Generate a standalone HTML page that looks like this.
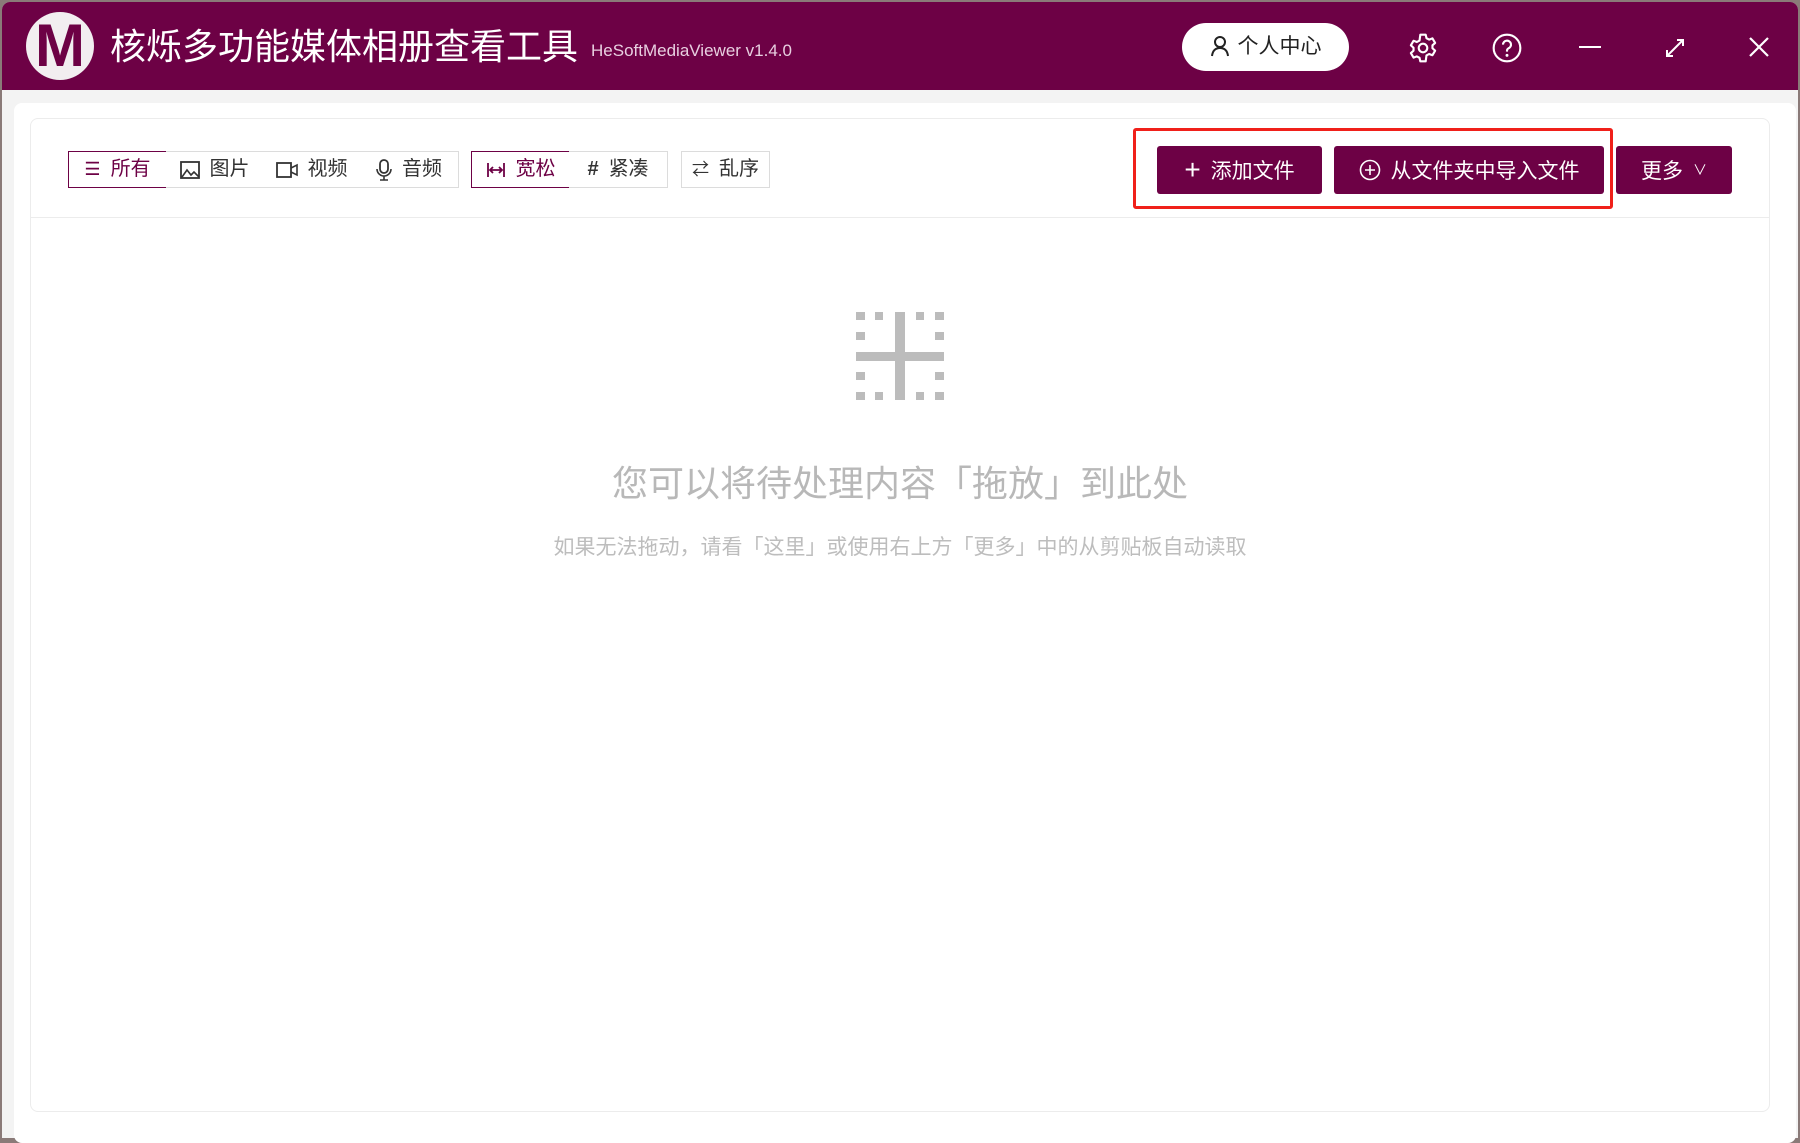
<!DOCTYPE html>
<html><head><meta charset="utf-8"><style>
*{margin:0;padding:0;box-sizing:border-box}
body{width:1800px;height:1140px;overflow:hidden;background:#8a7a78;font-family:"Liberation Sans","Noto Sans CJK SC",sans-serif;position:relative}
.win{position:absolute;left:2px;top:2px;width:1796px;height:1136px;background:#f3f3f3;border-radius:8px 8px 0 0;overflow:hidden}
.tb{position:absolute;left:0;top:0;width:100%;height:88px;background:#6d0145}
.abs{position:absolute}
.logo{left:24px;top:10px;width:68px;height:68px;border-radius:50%;background:#f2eef0;color:#6d0145;font-weight:bold;font-size:60px;line-height:68px;text-align:center;font-family:"Liberation Sans",sans-serif}
.title{left:108px;top:23px;color:#fff;font-size:36px;line-height:44px;white-space:nowrap}
.ver{left:589px;top:39px;color:#e8cfe0;font-size:17px;white-space:nowrap}
.pill{left:1180px;top:21px;width:167px;height:48px;border-radius:24px;background:#fff;color:#222;font-size:21px;line-height:48px;text-align:center}
.panel{left:14px;top:103px;width:1782px;height:1040px;background:#fff;border-radius:8px}
.card{left:30px;top:118px;width:1740px;height:994px;border:1px solid #ececec;border-radius:8px;background:#fff}
.line{left:31px;top:217px;width:1738px;height:1px;background:#ececec}
.btn{position:absolute;top:151px;height:37px;border:1px solid #dcdcdc;background:#fff;color:#333;font-size:20px;line-height:35px;display:flex;align-items:center;justify-content:center;gap:10px}
.btn.sel{border-color:#6d0145;color:#6d0145}
.pb{position:absolute;top:146px;height:48px;background:#6d0145;color:#fff;font-size:21px;display:flex;align-items:center;justify-content:center;gap:10px;border-radius:3px}
.red{left:1133px;top:128px;width:480px;height:81px;border:3px solid #f0201a;border-radius:3px}
.t1{left:0;width:1800px;top:455px;text-align:center;color:#b8b8b8;font-size:36px}
.t2{left:0;width:1800px;top:531px;text-align:center;color:#bdbdbd;font-size:21px}
</style></head><body>
<div class="win">
<div class="tb"></div>
<div class="abs logo">M</div>
<div class="abs title">核烁多功能媒体相册查看工具</div>
<div class="abs ver">HeSoftMediaViewer v1.4.0</div>
<div class="abs pill"><svg width="20" height="22" viewBox="0 0 20 22" style="vertical-align:-4px;margin-right:8px"><circle cx="10" cy="7" r="5" fill="none" stroke="#222" stroke-width="2"/><path d="M2 21 Q3 13 10 13 Q17 13 18 21" fill="none" stroke="#222" stroke-width="2"/></svg>个人中心</div>
<svg class="abs" style="left:1405px;top:30px" width="32" height="32" viewBox="0 0 24 24"><circle cx="12" cy="12" r="3.2" fill="none" stroke="#fff" stroke-width="1.6"/><path d="M10 2h4l.6 2.6 2 1.1 2.5-.9 2 3.4-2 1.8v2.2l2 1.8-2 3.4-2.5-.9-2 1.1L14 22h-4l-.6-2.6-2-1.1-2.5.9-2-3.4 2-1.8v-2.2l-2-1.8 2-3.4 2.5.9 2-1.1z" fill="none" stroke="#fff" stroke-width="1.6" stroke-linejoin="round"/></svg>
<svg class="abs" style="left:1489px;top:30px" width="32" height="32" viewBox="0 0 24 24"><circle cx="12" cy="12" r="10" fill="none" stroke="#fff" stroke-width="1.6"/><path d="M9 9.5a3 3 0 1 1 4 2.8c-.8.4-1 1-1 1.8v.6" fill="none" stroke="#fff" stroke-width="1.6"/><circle cx="12" cy="17.5" r="1.1" fill="#fff"/></svg>
<div class="abs" style="left:1577px;top:44px;width:22px;height:2px;background:#fff"></div>
<svg class="abs" style="left:1661px;top:34px" width="24" height="24" viewBox="0 0 24 24"><path d="M4 20L20 4M14 4h6v6M4 14v6h6" fill="none" stroke="#fff" stroke-width="2"/></svg>
<svg class="abs" style="left:1745px;top:33px" width="24" height="24" viewBox="0 0 24 24"><path d="M3 3L21 21M21 3L3 21" stroke="#fff" stroke-width="2.2"/></svg>
</div>
<div class="abs panel"></div>
<div class="abs card"></div>
<div class="abs line"></div>
<div class="btn sel" style="left:68px;width:99px"><span style="font-size:18px">☰</span>所有</div>
<div class="btn" style="left:166px;width:98px;border-left:none"><svg width="20" height="18" viewBox="0 0 20 18"><rect x="1" y="1" width="18" height="16" fill="none" stroke="#333" stroke-width="1.8"/><path d="M2 16l5-7 4 5 3-3 5 5" fill="none" stroke="#333" stroke-width="1.6"/></svg>图片</div>
<div class="btn" style="left:263px;width:98px;border-left:none"><svg width="22" height="18" viewBox="0 0 22 18"><rect x="1" y="2" width="14" height="14" fill="none" stroke="#333" stroke-width="1.8"/><path d="M15 7l6-3v10l-6-3" fill="none" stroke="#333" stroke-width="1.6"/></svg>视频</div>
<div class="btn" style="left:360px;width:99px;border-left:none"><svg width="16" height="22" viewBox="0 0 16 22"><rect x="4" y="1" width="8" height="13" rx="4" fill="none" stroke="#333" stroke-width="1.8"/><path d="M1 10a7 7 0 0 0 14 0M8 17v4M4 21h8" fill="none" stroke="#333" stroke-width="1.6"/></svg>音频</div>
<div class="btn sel" style="left:471px;width:99px"><svg width="20" height="16" viewBox="0 0 20 16"><path d="M2 1v14M18 1v14M4 8h12M7 5l-3 3 3 3M13 5l3 3-3 3" fill="none" stroke="#6d0145" stroke-width="1.8"/></svg>宽松</div>
<div class="btn" style="left:569px;width:99px;border-left:none"><span style="font-weight:bold">#</span>紧凑</div>
<div class="btn" style="left:681px;width:89px"><span style="font-size:17px">⇄</span>乱序</div>
<div class="abs red"></div>
<div class="pb" style="left:1157px;width:165px"><span style="font-size:28px;font-weight:200">+</span>添加文件</div>
<div class="pb" style="left:1334px;width:270px"><svg width="22" height="22" viewBox="0 0 22 22"><circle cx="11" cy="11" r="9.5" fill="none" stroke="#fff" stroke-width="1.6"/><path d="M11 6v10M6 11h10" stroke="#fff" stroke-width="1.6"/></svg>从文件夹中导入文件</div>
<div class="pb" style="left:1616px;width:116px">更多<span style="font-size:14px">∨</span></div>
<svg class="abs" style="left:856px;top:312px" width="88" height="88" viewBox="0 0 88 88" fill="#bcbcbc">
<rect x="0" y="0" width="9" height="8"/><rect x="19" y="0" width="8" height="8"/><rect x="60" y="0" width="8" height="8"/><rect x="79" y="0" width="9" height="8"/>
<rect x="0" y="80" width="9" height="8"/><rect x="19" y="80" width="8" height="8"/><rect x="60" y="80" width="8" height="8"/><rect x="79" y="80" width="9" height="8"/>
<rect x="0" y="20" width="9" height="8"/><rect x="0" y="60" width="9" height="8"/><rect x="79" y="20" width="9" height="8"/><rect x="79" y="60" width="9" height="8"/>
<rect x="39" y="0" width="10" height="88"/><rect x="0" y="40" width="88" height="9"/></svg>
<div class="abs t1">您可以将待处理内容「拖放」到此处</div>
<div class="abs t2">如果无法拖动，请看「这里」或使用右上方「更多」中的从剪贴板自动读取</div>
</body></html>
